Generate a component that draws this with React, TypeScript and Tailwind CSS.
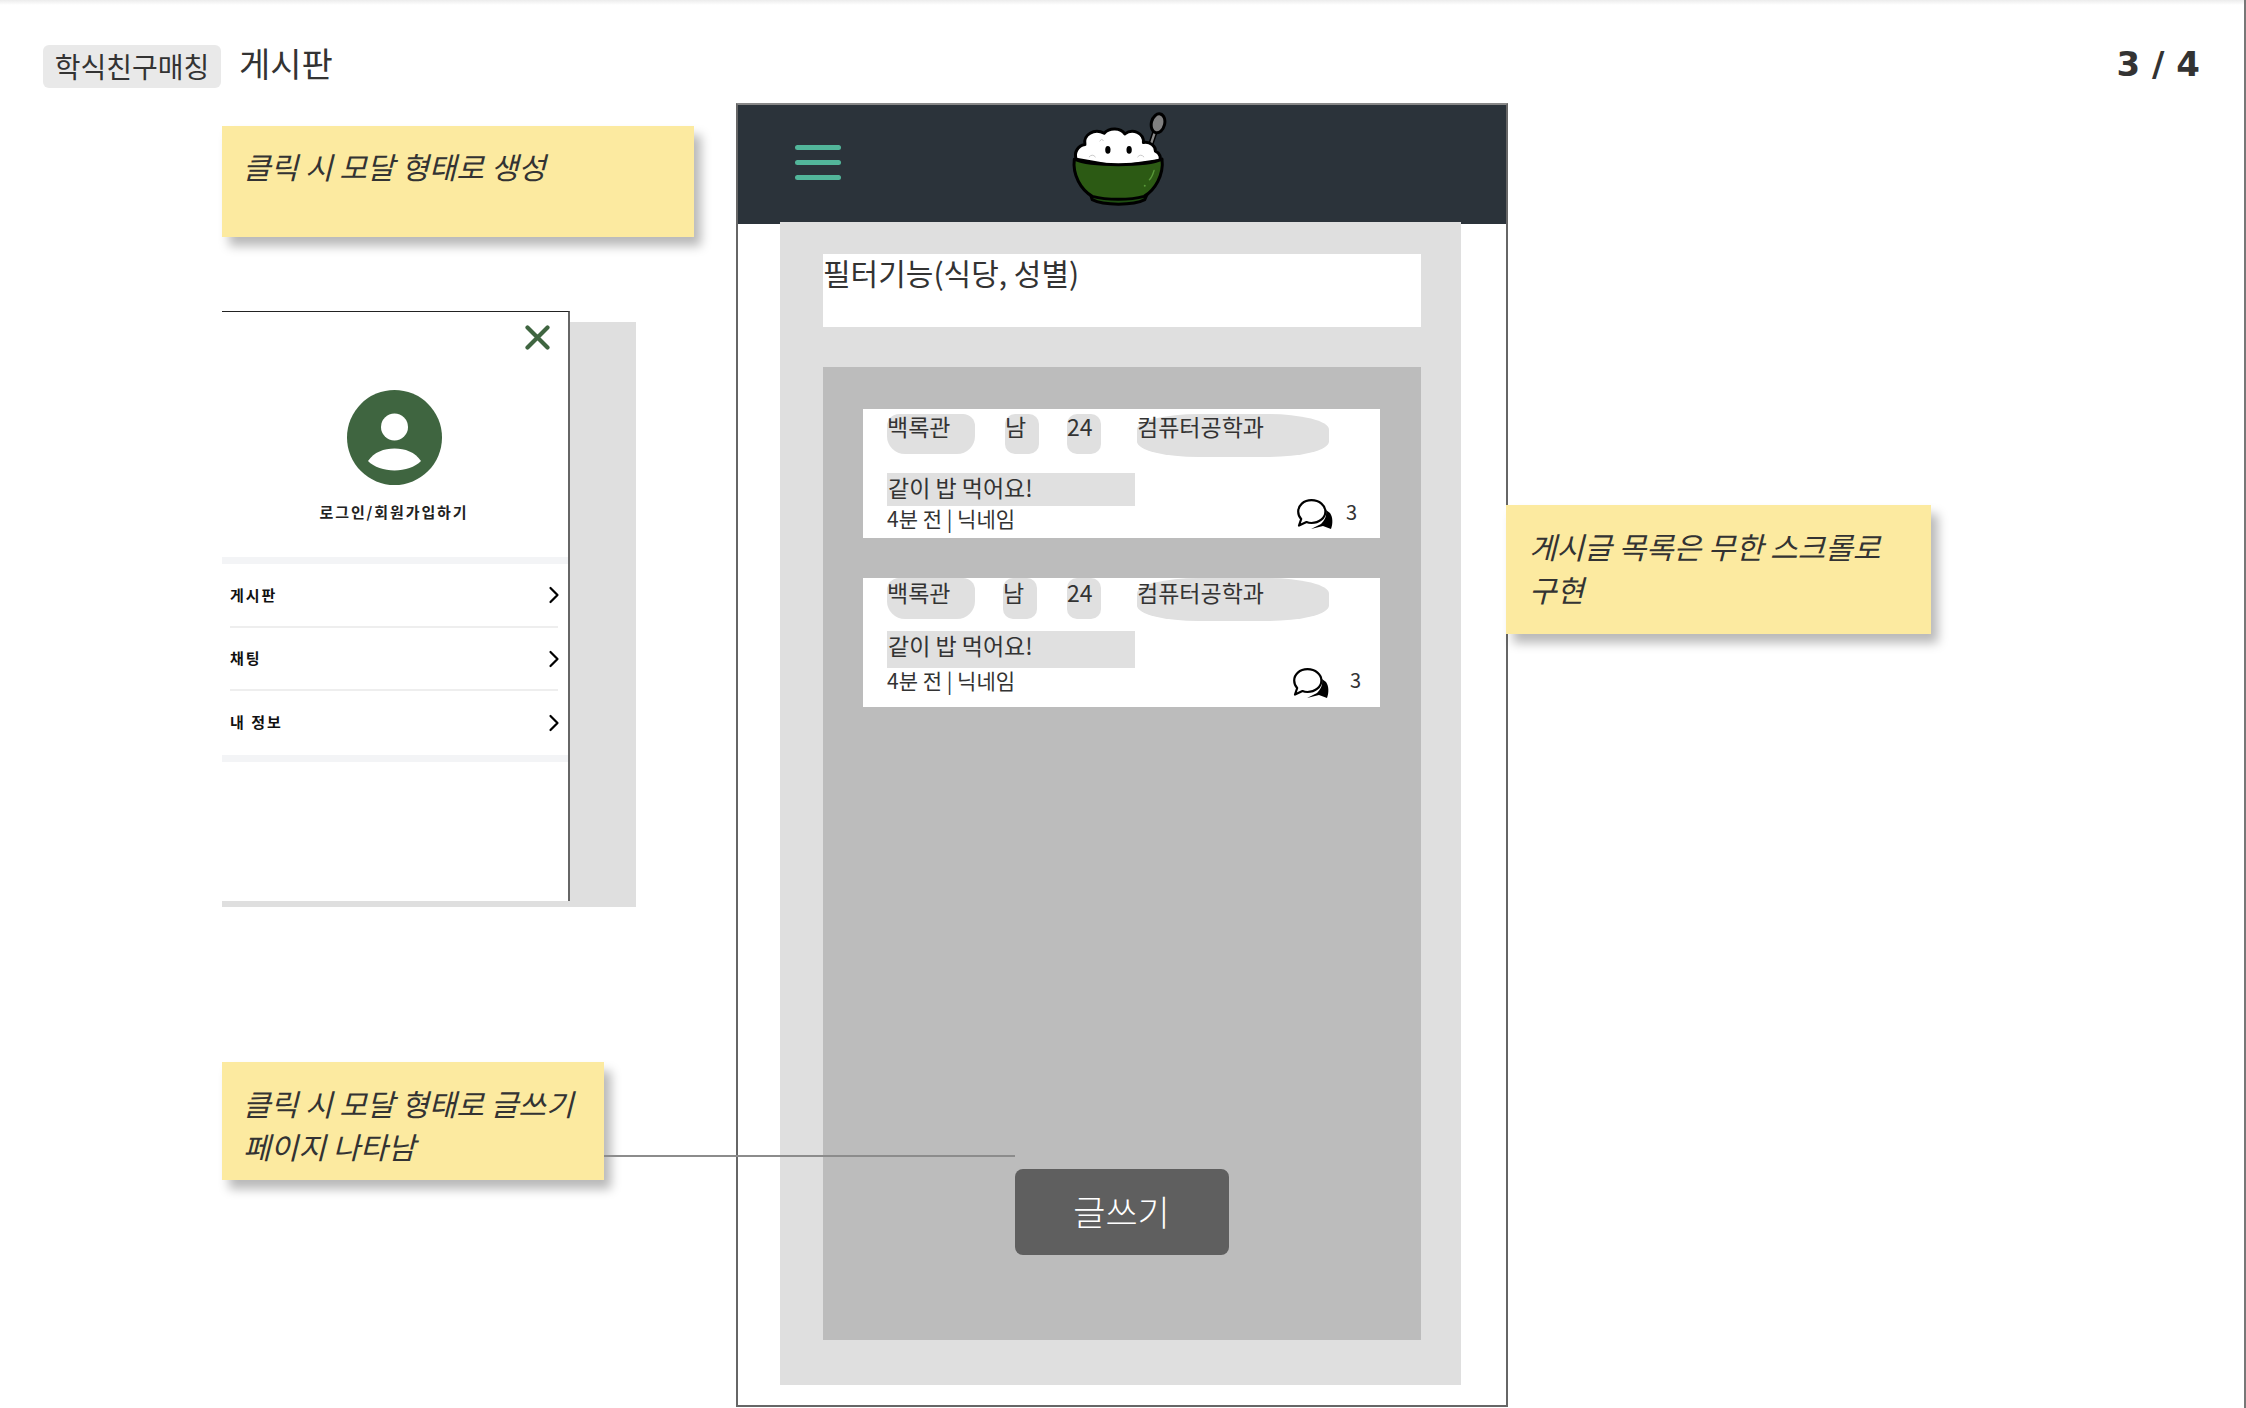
import { ChevronRight } from 'lucide-react';

const KR = "font-['Noto_Sans_CJK_KR',sans-serif]";

function Sticky({ lines, className }: { lines: string[]; className: string }) {
  return (
    <div className={`bg-[#fceaa0] shadow-[7px_9px_10px_rgba(0,0,0,0.28)] pl-[21px] italic text-[30px] leading-[43px] text-[#333] ${className}`}>
      {lines.map((line) => (
        <div key={line} className="whitespace-nowrap">{line}</div>
      ))}
    </div>
  );
}

function ChatIcon() {
  return (
    <svg width="36" height="30" viewBox="0 0 36 30" className="shrink-0">
      {/* back bubble */}
      <path d="M14 30 L24 25 C27 22 30 18 29 11 L33 14 C36 18 36 25 34 30 L26 27 Z" fill="#000" />
      {/* front bubble */}
      <path
        d="M14.5 1.2 C22.5 1.2 28.4 6.5 28.4 12.5 C28.4 19 22 24 14.5 24 C12.5 24 11 23.7 9.5 23 L2 26.5 L4.2 20 C2.2 18 1.2 15.5 1.2 12.5 C1.2 6.5 6.5 1.2 14.5 1.2 Z"
        fill="#fff"
        stroke="#000"
        strokeWidth="2.2"
        strokeLinejoin="round"
      />
    </svg>
  );
}

function Pill({ text, w, h, mr, radius, leading }: { text: string; w: string; h: string; mr: string; radius: string; leading: string }) {
  return (
    <div className={`bg-[#e0e0e0] ${w} ${h} ${mr} ${radius} ${leading} shrink-0 text-[23px] text-[#333] whitespace-nowrap`}>
      {text}
    </div>
  );
}

type CardProps = {
  top: string;
  pad: string;
  pillH: string;
  bigH: string;
  leading: string;
  genderMr: string;
  ageMr: string;
  titleTop: string;
  titleH: string;
  iconTop: string;
  iconLeft: string;
  countLeft: string;
  countTop: string;
};

function PostCard({ top, pad, pillH, bigH, leading, genderMr, ageMr, titleTop, titleH, iconTop, iconLeft, countLeft, countTop }: CardProps) {
  return (
    <div className={`bg-white h-[129px] pl-[24px] ${top} ${pad}`}>
      <div className="flex items-start">
        <Pill text="백록관" w="w-[88px]" h={pillH} mr={genderMr} leading={leading} radius="rounded-b-[18px] rounded-t-[12px]" />
        <Pill text="남" w="w-[34px]" h={pillH} mr={ageMr} leading={leading} radius="rounded-[10px]" />
        <Pill text="24" w="w-[34px]" h={pillH} mr="mr-[36px]" leading={leading} radius="rounded-[10px]" />
        <Pill text="컴퓨터공학과" w="w-[192px]" h={bigH} mr="" leading={leading} radius="rounded-[32%/36%]" />
      </div>
      <div className="flex">
        <div className="w-[248px]">
          <div className={`bg-[#e0e0e0] pl-px text-[23px] leading-[29px] text-[#333] whitespace-nowrap ${titleTop} ${titleH}`}>
            같이 밥 먹어요!
          </div>
          <div className="text-[21px] leading-[24px] text-[#333] whitespace-nowrap">4분 전 | 닉네임</div>
        </div>
        <div className={`flex items-start ${iconLeft} ${iconTop}`}>
          <ChatIcon />
          <span className={`text-[20px] leading-[22px] text-[#333] ${countLeft} ${countTop}`}>3</span>
        </div>
      </div>
    </div>
  );
}

function MenuRow({ label, divider, height }: { label: string; divider: boolean; height: string }) {
  return (
    <div className={`${height} ml-[8px] mr-[10px] flex items-center justify-between ${divider ? 'border-b-2 border-[#eeeeee]' : ''}`}>
      <span className="text-[15px] font-bold tracking-[2px] text-[#111] whitespace-pre">{label}</span>
      <ChevronRight className="w-[28px] h-[28px] -mr-[10px] text-black" strokeWidth={1.9} />
    </div>
  );
}

function RiceBowl() {
  return (
    <svg width="97" height="98" viewBox="90 30 290 295" className="shrink-0">
      {/* spoon */}
      <path d="M324 158 L345 95" stroke="#000" strokeWidth="16" strokeLinecap="round" />
      <path d="M324 158 L345 95" stroke="#8a8a8a" strokeWidth="7" strokeLinecap="round" />
      <ellipse cx="354" cy="70" rx="20" ry="29" transform="rotate(14 354 70)" fill="#808080" stroke="#000" strokeWidth="9" />
      {/* rice */}
      <path
        d="M108 178 C100 158 112 138 134 134 C128 104 162 84 192 100 C208 82 242 84 254 102 C278 84 312 100 310 128 C330 124 348 140 346 154 C360 160 364 174 358 182 L232 200 Z"
        fill="#fff"
        stroke="#000"
        strokeWidth="9"
        strokeLinejoin="round"
      />
      <ellipse cx="203" cy="150" rx="8" ry="12" fill="#000" />
      <ellipse cx="267" cy="150" rx="8" ry="12" fill="#000" />
      <path d="M178 124 Q184 114 190 122 M146 172 Q156 160 166 172 M292 172 Q302 160 312 172" fill="none" stroke="#c8c8c8" strokeWidth="3" />
      {/* foot */}
      <path d="M150 282 L156 300 C190 318 280 318 314 300 L322 282 Z" fill="#1f4f12" stroke="#000" strokeWidth="9" strokeLinejoin="round" />
      {/* bowl */}
      <path
        d="M102 178 C150 200 320 200 366 178 C372 226 344 272 312 290 C270 302 200 302 156 290 C122 270 96 226 102 178 Z"
        fill="#2c5a14"
        stroke="#000"
        strokeWidth="9"
        strokeLinejoin="round"
      />
      <path d="M342 212 C338 226 332 236 328 240" fill="none" stroke="#5a9a3a" strokeWidth="4" strokeLinecap="round" />
      <circle cx="314" cy="258" r="3" fill="#5a9a3a" />
    </svg>
  );
}

export default function App() {
  return (
    <div className={`relative w-[2246px] h-[1408px] overflow-hidden bg-white border-r-2 border-[#777] ${KR}`}>
      <div className="h-[5px] bg-gradient-to-b from-[#ececec] to-white" />

      {/* Title row */}
      <div className="flex items-start justify-between pl-[43px] pr-[44px] pt-[40px] h-[98px]">
        <div className="flex items-center">
          <div className="w-[178px] h-[43px] pb-[2px] bg-[#e9e9e9] rounded-[6px] flex items-center justify-center text-[28px] text-[#333] whitespace-nowrap">
            학식친구매칭
          </div>
          <div className="ml-[18px] -mt-[8px] text-[34px] leading-[43px] text-[#333]">게시판</div>
        </div>
        <div className="font-['DejaVu_Sans',sans-serif] font-bold text-[34px] leading-[38px] text-[#333]">3 / 4</div>
      </div>

      <div className="flex pl-[222px]">
        {/* Left annotations and menu modal */}
        <div className="relative z-10 w-[514px] shrink-0 pt-[23px]">
          <Sticky lines={['클릭 시 모달 형태로 생성']} className="w-[472px] h-[111px] pt-[19px]" />

          <div className="mt-[85px] w-[414px] h-[585px] bg-[#dfdfdf]">
            <div className="relative -top-[11px] w-[348px] h-[590px] bg-white border-t border-r-2 border-t-[#222] border-r-[#666]">
              <div className="flex justify-end pt-[13px] pr-[18px]">
                <svg width="25" height="25" viewBox="0 0 25 25">
                  <path d="M2.5 2.5 L22.5 22.5 M22.5 2.5 L2.5 22.5" stroke="#3f6540" strokeWidth="4.2" strokeLinecap="round" />
                </svg>
              </div>
              <div className="flex flex-col items-center mt-[40px]">
                <svg width="95" height="95" viewBox="0 0 95 95" className="-ml-[2px]">
                  <circle cx="47.5" cy="47.5" r="47.5" fill="#3f6540" />
                  <circle cx="47.5" cy="37" r="13.5" fill="#fff" />
                  <path d="M21 71 C27 62 37 58.5 47.5 58.5 C58 58.5 68 62 74 71 C68 77 58 80.5 47.5 80.5 C37 80.5 27 77 21 71 Z" fill="#fff" />
                </svg>
                <div className="mt-[15px] -ml-[2px] text-[15px] leading-[24px] font-bold tracking-[1.9px] text-[#222] whitespace-nowrap">
                  로그인/회원가입하기
                </div>
              </div>
              <div className="mt-[33px] h-[7px] bg-[#f3f4f6]" />
              <MenuRow label="게시판" divider height="h-[64px]" />
              <MenuRow label="채팅" divider height="h-[63px]" />
              <MenuRow label="내 정보" divider={false} height="h-[63px]" />
              <div className="mt-[1px] h-[7px] bg-[#f3f4f6]" />
            </div>
          </div>

          <div className="relative mt-[155px]">
            <Sticky lines={['클릭 시 모달 형태로 글쓰기', '페이지 나타남']} className="w-[382px] h-[118px] pt-[20px]" />
            {/* connector to the write button */}
            <div className="absolute left-[382px] top-[93px] w-[411px] h-[2px] bg-[#8c8c8c]" />
          </div>
        </div>

        {/* Phone wireframe */}
        <div className="w-[772px] h-[1304px] shrink-0 border-2 border-[#666] border-t-[#888] bg-white">
          <div className="h-[119px] bg-[#2b333a] flex items-start">
            <div className="ml-[57px] mt-[40px] w-[46px] flex flex-col gap-[10px]">
              <div className="h-[5px] rounded-full bg-[#52b69a]" />
              <div className="h-[5px] rounded-full bg-[#52b69a]" />
              <div className="h-[5px] rounded-full bg-[#52b69a]" />
            </div>
            <div className="ml-[229px] mt-[5px]">
              <RiceBowl />
            </div>
          </div>
          <div className="-mt-[2px] mx-[42px] w-[681px] bg-[#dfdfdf] pt-[32px] pl-[43px] pr-[40px] pb-[45px]">
            <div className="h-[73px] bg-white text-[30px] leading-[36px] text-[#333] whitespace-nowrap">필터기능(식당, 성별)</div>
            <div className="mt-[40px] h-[973px] bg-[#bcbcbc] pt-[42px] pl-[40px] pr-[41px] flex flex-col">
              <PostCard
                top=""
                pad="pt-[5px]"
                pillH="h-[40px]"
                bigH="h-[43px]"
                leading="leading-[24px]"
                genderMr="mr-[30px]"
                ageMr="mr-[28px]"
                titleTop="mt-[16px]"
                titleH="h-[33px]"
                iconTop="mt-[42px]"
                iconLeft="ml-[162px]"
                countLeft="ml-[13px]"
                countTop="mt-[2px]"
              />
              <PostCard
                top="mt-[40px]"
                pad=""
                pillH="h-[41px]"
                bigH="h-[43px]"
                leading="leading-[28px]"
                genderMr="mr-[28px]"
                ageMr="mr-[30px]"
                titleTop="mt-[10px]"
                titleH="h-[37px]"
                iconTop="mt-[47px]"
                iconLeft="ml-[158px]"
                countLeft="ml-[21px]"
                countTop="mt-[1px]"
              />
              <div className="mt-[462px] self-center w-[214px] h-[86px] rounded-[8px] bg-[#5f5f5f] flex items-center justify-center text-[35px] leading-[48px] pb-[2px] font-light text-white">
                글쓰기
              </div>
            </div>
          </div>
        </div>

        {/* Right annotation */}
        <div className="-ml-[2px] pt-[402px] shrink-0 relative z-10">
          <Sticky lines={['게시글 목록은 무한 스크롤로', '구현']} className="w-[425px] h-[129px] pt-[20px] pl-[23px]" />
        </div>
      </div>
    </div>
  );
}
